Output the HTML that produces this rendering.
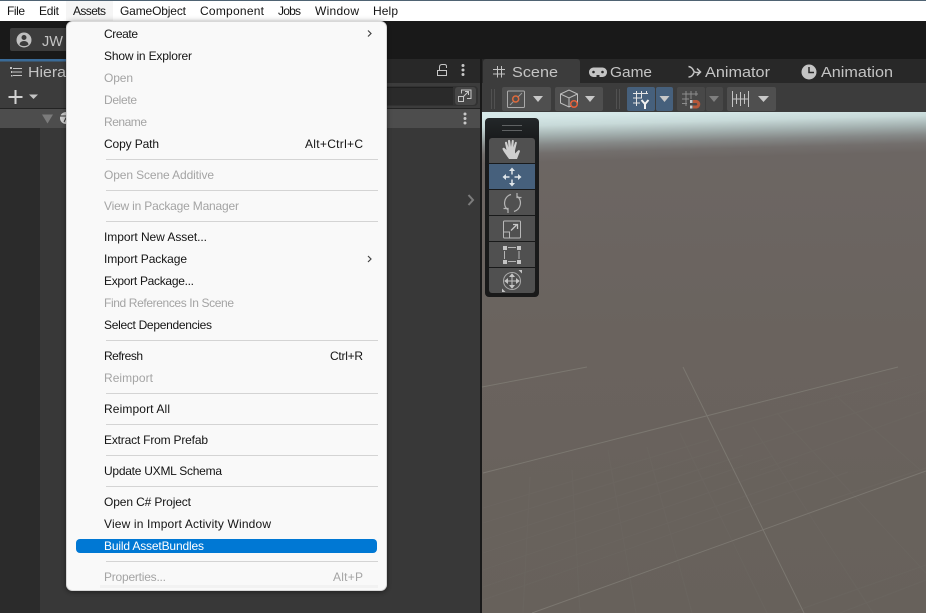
<!DOCTYPE html>
<html><head><meta charset="utf-8"><style>
html,body{margin:0;padding:0;width:926px;height:613px;overflow:hidden;background:#191919}
svg{display:block;position:absolute;left:0;top:0}
text{font-family:"Liberation Sans",sans-serif;font-size:12px;white-space:pre}
.m text{fill:#141414}
.d text{fill:#a4a4a4}
.t text{font-size:15px;fill:#c4c4c4}
</style></head><body>
<svg width="926" height="613" viewBox="0 0 926 613" xmlns="http://www.w3.org/2000/svg">
<defs>
<linearGradient id="sky" gradientUnits="userSpaceOnUse" x1="700" y1="112" x2="701.200" y2="158">
<stop offset="0" stop-color="#d6e8e8"/><stop offset=".2" stop-color="#c8dad9"/><stop offset=".42" stop-color="#a3b0af"/><stop offset=".62" stop-color="#858887"/><stop offset=".8" stop-color="#736f6d"/><stop offset="1" stop-color="#6c6663"/>
</linearGradient>
<linearGradient id="ground" gradientUnits="userSpaceOnUse" x1="0" y1="158" x2="0" y2="613"><stop offset="0" stop-color="#6c6663"/><stop offset=".4" stop-color="#6a635e"/><stop offset="1" stop-color="#67615b"/></linearGradient>
<linearGradient id="tb" x1="0" y1="0" x2="0" y2="1"><stop offset="0" stop-color="#232729"/><stop offset=".12" stop-color="#191b1c"/><stop offset="1" stop-color="#191919"/></linearGradient>
<filter id="sh" x="-10%" y="-5%" width="120%" height="110%"><feDropShadow dx="0" dy="1" stdDeviation="3" flood-color="#000" flood-opacity=".45"/></filter>
</defs>

<rect width="926" height="613" fill="#191919"/>

<!-- left panel -->
<rect x="0" y="59" width="480" height="554" fill="#383838"/>
<rect x="0" y="59" width="480" height="24" fill="#282828"/>
<rect x="0" y="59" width="90" height="24" fill="#3c3c3c"/>
<rect x="0" y="59" width="90" height="2.500" fill="#3a6b98"/>
<rect x="0" y="83" width="480" height="25" fill="#3c3c3c"/>
<rect x="0" y="108" width="480" height="1" fill="#232323"/>
<rect x="0" y="109" width="480" height="19" fill="#4d4d4d"/>
<rect x="0" y="128" width="40" height="485" fill="#2b2b2b"/>
<rect x="380" y="86" width="98" height="20" rx="4" fill="#323232"/>
<rect x="380" y="87" width="73" height="18" fill="#2a2a2a"/>
<rect x="380" y="87" width="73" height="1" fill="#1f1f1f"/>
<rect x="455" y="87" width="21" height="18" rx="3" fill="#474747"/>
<g fill="none" stroke="#c8c8c8" stroke-width="1">
<rect x="458.500" y="96.500" width="5" height="5"/><path d="M461.500 93.500v-3.500h9.500v8.500h-4M463 97l5-5M465 91.500h3.500v3.500"/>
<path d="M439.500 70v-3q0-2.500 2.500-2.500h2.500q2 0 2 2v1.500"/><rect x="437.500" y="70.500" width="9" height="5"/>
</g>
<g fill="#c8c8c8"><circle cx="463" cy="65.500" r="1.500"/><circle cx="463" cy="70" r="1.500"/><circle cx="463" cy="74.500" r="1.500"/>
<circle cx="465" cy="114" r="1.500"/><circle cx="465" cy="118.500" r="1.500"/><circle cx="465" cy="123" r="1.500"/></g>
<!-- hierarchy icon + label -->
<g stroke="#c4c4c4" stroke-width="1" fill="none"><path d="M13 68.500h9M13 72h9M13 75.500h9"/></g>
<g fill="#c4c4c4"><rect x="10" y="67" width="2" height="2"/><rect x="11" y="71" width="1.500" height="2"/><rect x="11" y="75" width="1.500" height="1.500"/></g>
<text x="28" y="77" style="font-size:15px" fill="#c4c4c4" textLength="38" lengthAdjust="spacingAndGlyphs">Hiera</text>
<path d="M15.500 90v14M8.500 97h14" stroke="#d2d2d2" stroke-width="2" fill="none"/>
<path d="M29 94.500h9l-4.500 4.500z" fill="#c4c4c4"/>
<path d="M42 114.500h11l-5.500 9z" fill="#7b7b7b"/>
<circle cx="66" cy="118" r="6" fill="#d0d0d0"/><path d="M60 116h7l-3 6" stroke="#333" stroke-width="1" fill="none"/>
<!-- account -->
<rect x="10" y="28" width="60" height="23" rx="2" fill="#3c3c3c"/>
<circle cx="24" cy="40" r="7.500" fill="#c0c0c0"/><circle cx="24" cy="37.500" r="2.500" fill="#3c3c3c"/><path d="M19.500 44.500a4.500 3.500 0 0 1 9 0a7 7 0 0 1-9 0z" fill="#3c3c3c"/>
<text x="42" y="46" style="font-size:15px" fill="#c4c4c4" textLength="21" lengthAdjust="spacingAndGlyphs">JW</text>
<!-- chevron -->
<path d="M468.500 195l4.500 5-4.500 5" stroke="#7c7c7c" stroke-width="2" fill="none"/>

<!-- scene panel -->
<rect x="480" y="58" width="2" height="555" fill="#191919"/>
<rect x="482" y="59" width="444" height="24" fill="#282828"/>
<path d="M483 83v-21a3 3 0 0 1 3-3h91a3 3 0 0 1 3 3v21z" fill="#3c3c3c"/>
<rect x="482" y="83" width="444" height="29" fill="#3c3c3c"/>
<g class="t">
<text x="512" y="77" textLength="46" lengthAdjust="spacingAndGlyphs">Scene</text>
<text x="610" y="77" textLength="42" lengthAdjust="spacingAndGlyphs">Game</text>
<text x="705" y="77" textLength="65" lengthAdjust="spacingAndGlyphs">Animator</text>
<text x="821" y="77" textLength="72" lengthAdjust="spacingAndGlyphs">Animation</text>
</g>
<!-- tab icons -->
<path d="M497.500 66v11.500M501.500 66v11.500M493 69.500h12M493 74h12" stroke="#c4c4c4" stroke-width="1" fill="none"/>
<rect x="589" y="67.500" width="18" height="9.500" rx="4.500" fill="#c4c4c4"/>
<g fill="#282828"><circle cx="593.500" cy="72" r="1.300"/><circle cx="602.500" cy="72" r="1.300"/><rect x="596.500" y="75" width="3" height="2"/></g>
<path d="M688.500 66.500q3 .5 4.500 3l1 2q1 1 3 1h3M688.500 77q3 0 4.500-2.500l1-2M697 68.500l3.500 3.500-3.500 3.500" stroke="#c4c4c4" stroke-width="1.500" fill="none"/>
<circle cx="809" cy="72" r="7.500" fill="#c4c4c4"/><path d="M809 67v5.500h5" stroke="#282828" stroke-width="1.500" fill="none"/>

<!-- scene toolbar -->
<g fill="#515151"><rect x="491" y="89" width="1" height="20"/><rect x="494" y="89" width="1" height="20"/><rect x="616" y="89" width="1" height="20"/><rect x="619" y="89" width="1" height="20"/></g>
<g fill="#4f4f4f"><rect x="502" y="87" width="49" height="24" rx="2"/><rect x="555" y="87" width="48" height="24" rx="2"/>
<rect x="677" y="87" width="28" height="24" rx="2" fill="#484848"/><rect x="706" y="87" width="17" height="24" rx="2" fill="#484848"/><rect x="727" y="87" width="49" height="24" rx="2"/></g>
<rect x="627" y="87" width="28" height="24" rx="2" fill="#46607c"/><rect x="656" y="87" width="17" height="24" rx="2" fill="#46607c"/>
<g fill="#c8c8c8"><path d="M533 96h10l-5 6z"/><path d="M585 96h10l-5 6z"/><path d="M659.500 96h10l-5 6z"/><path d="M758 96h11l-5.500 6z"/></g>
<path d="M709 96h10l-5 6z" fill="#7f7f7f"/>
<!-- pivot icon -->
<rect x="507.500" y="91" width="17" height="16.500" rx="1" fill="none" stroke="#aaa"/>
<path d="M510 105l12-12" stroke="#999" stroke-width="1"/><circle cx="515.700" cy="99" r="3" fill="#4f4f4f" stroke="#e06a3c" stroke-width="1.500"/>
<!-- cube icon -->
<path d="M560.500 94l8.500-4 8.500 4v9l-8.500 4-8.500-4zM560.500 94l8.500 4 8.500-4M569 98v9" fill="none" stroke="#bdbdbd"/>
<circle cx="574" cy="104" r="3.300" fill="#4f4f4f" stroke="#e2603a" stroke-width="1.500"/>
<!-- grid Y -->
<path d="M636.500 91v15M641.500 91v7M646.500 91v3M633 93.500h15M633 98h9M633 103h7" stroke="#e4e4e4" stroke-width="1" fill="none"/>
<path d="M641.500 100l3.500 4 3.500-4M645 104v5" stroke="#f2f2f2" stroke-width="2" fill="none"/>
<!-- snap -->
<path d="M686 91v15M691 91v8M696 91v5M682 94h16M682 99h7M682 103.500h5" stroke="#8d8d8d" stroke-width="1" fill="none"/>
<path d="M693 101.500h3.500a2.800 2.800 0 0 1 0 5.500h-3.500" stroke="#b5583a" stroke-width="3" fill="none"/>
<rect x="690" y="100" width="2.500" height="3" fill="#ccc"/><rect x="690" y="105.500" width="2.500" height="3" fill="#ccc"/>
<!-- increment -->
<path d="M732.500 91v16M748.500 91v16M736.500 94v10M740.500 92v14M744.500 94v10M733 99h15" stroke="#c4c4c4" stroke-width="1" fill="none"/>

<!-- viewport -->
<rect x="482" y="112" width="444" height="501" fill="url(#sky)"/>
<rect x="482" y="165" width="444" height="448" fill="url(#ground)"/>
<g stroke="#6e6a64" stroke-width="1" fill="none" opacity=".4">
<path d="M530 477l-7 136M572 470l8 143M608 450l28 163M647 447l45 166M680 433l87 180M753 427l120 186M777 413l149 160M835 395l91 80"/>
<path d="M483 508l226-68M483 523l236-73M483 540l260-85M483 553l290-97M483 570l315-108M483 587l335-116M483 600l365-128M790 613l136-48M840 613l86-33M720 430l206-58M740 450l186-60M760 470l166-60M830 500l96-32"/>
</g>
<g stroke="#7b7770" stroke-width="1" fill="none">
<path d="M482 387l105-20M483 473l415-106M683 367l121 246M532 613l394-142"/>
</g>

<!-- tools -->
<rect x="485" y="118" width="54" height="179" rx="4" fill="url(#tb)"/>
<path d="M502 125.500h20M502 130.500h20" stroke="#5f6263" stroke-width="1"/>
<g fill="#505050">
<path d="M489 163v-22a3 3 0 0 1 3-3h40a3 3 0 0 1 3 3v22z"/>
<rect x="489" y="190" width="46" height="25"/><rect x="489" y="216" width="46" height="25"/><rect x="489" y="242" width="46" height="25"/>
<path d="M489 268h46v22a3 3 0 0 1-3 3h-40a3 3 0 0 1-3-3z"/></g>
<rect x="489" y="164" width="46" height="25" fill="#46607c"/>
<!-- hand -->
<path d="M509 159c-2-3-6-8-6.500-10 0-1.500 1.500-1.500 2.500-.5l1.500 1.500-1.500-7c0-1.500 1.500-1.500 2-.5l1.500 5-.5-6.500c0-1.500 2-1.500 2.200 0l.8 6 .8-6c.2-1.500 2-1.500 2 0l-.5 6.500 1.700-5c.5-1 2-.8 1.800.5l-1.800 7.500v3l3-3c1-1 2.500 0 1.800 1.200L517 159z" fill="#cfcfcf"/>
<!-- move -->
<path d="M512 170.500v4M512 179.500v4M505.500 177h4M514.500 177h4" stroke="#e0e6ea" stroke-width="1.500" fill="none"/>
<path d="M512 167.500l-3 3.500h6zM512 186.500l-3-3.500h6zM502.500 177l3.500-3v6zM521.500 177l-3.500-3v6z" fill="#e0e6ea"/>
<!-- rotate -->
<path d="M511 194.500a8.800 8.800 0 0 0-3.500 15M514 211.500a8.800 8.800 0 0 0 3.500-15" fill="none" stroke="#b4b4b4" stroke-width="1.200"/>
<path d="M517 193v4.500h4.500M508 213v-4.500h-4.500" fill="none" stroke="#b4b4b4" stroke-width="1.200"/>
<!-- scale -->
<rect x="503.500" y="221" width="17" height="17" rx="1" fill="none" stroke="#b8b8b8" stroke-width="1"/>
<path d="M503.500 232h6v6" fill="none" stroke="#b8b8b8"/>
<path d="M511 230.500l6-6M513 224.500h4.500v4.500" fill="none" stroke="#c8c8c8" stroke-width="1.300"/>
<!-- rect -->
<g fill="#c4c4c4"><rect x="503" y="246" width="4" height="4"/><rect x="517" y="246" width="4" height="4"/><rect x="503" y="260" width="4" height="4"/><rect x="517" y="260" width="4" height="4"/></g>
<path d="M508 247.500h8M508 261.500h8M504.500 251v8M519 251v8" stroke="#b4b4b4" fill="none"/>
<!-- transform -->
<circle cx="512" cy="281" r="8.500" fill="none" stroke="#aaa" stroke-width="1"/>
<path d="M512 274v14M505 281h14M512 274l-2 2.500h4zM512 288l-2-2.500h4zM505 281l2.500-2v4zM519 281l-2.500-2v4z" fill="#c4c4c4" stroke="#c4c4c4"/>
<path d="M502 292v-3.500l3.500 3.500zM522 270v3.500l-3.500-3.500z" fill="#c4c4c4"/>

<!-- top menu bar -->
<rect width="926" height="21" fill="#ffffff"/>
<rect width="926" height="1" fill="#4f6373"/>
<rect x="66" y="1" width="47" height="20" fill="#f5f5f5"/>
<g class="m">
<text x="7" y="15" textLength="18" lengthAdjust="spacing">File</text>
<text x="39" y="15" textLength="20" lengthAdjust="spacing">Edit</text>
<text x="73" y="15" textLength="33" lengthAdjust="spacing">Assets</text>
<text x="120" y="15" textLength="66" lengthAdjust="spacing">GameObject</text>
<text x="200" y="15" textLength="64" lengthAdjust="spacing">Component</text>
<text x="278" y="15" textLength="23" lengthAdjust="spacing">Jobs</text>
<text x="315" y="15" textLength="44" lengthAdjust="spacing">Window</text>
<text x="373" y="15" textLength="25" lengthAdjust="spacing">Help</text>
</g>

<!-- dropdown -->
<rect x="66.500" y="21.500" width="320" height="569" rx="6" fill="#f9f9f9" stroke="#d8d8d8" stroke-width="1" filter="url(#sh)"/>
<rect x="100" y="585" width="278" height="3" fill="#f2f2f2"/>
<rect x="76" y="539" width="301" height="14" rx="4" fill="#0078d4"/>
<g fill="#d4d4d4">
<rect x="106" y="159" width="272" height="1"/><rect x="106" y="190" width="272" height="1"/><rect x="106" y="221" width="272" height="1"/><rect x="106" y="340" width="272" height="1"/><rect x="106" y="393" width="272" height="1"/><rect x="106" y="424" width="272" height="1"/><rect x="106" y="455" width="272" height="1"/><rect x="106" y="486" width="272" height="1"/><rect x="106" y="561" width="272" height="1"/>
</g>
<path d="M368 30.500l3 3-3 3M368 256l3 3-3 3" stroke="#444" stroke-width="1.200" fill="none"/>
<g class="m">
<text x="104" y="38" textLength="34" lengthAdjust="spacing">Create</text>
<text x="104" y="60" textLength="88" lengthAdjust="spacing">Show in Explorer</text>
<text x="104" y="148" textLength="55" lengthAdjust="spacing">Copy Path</text>
<text x="305" y="148" textLength="58" lengthAdjust="spacing">Alt+Ctrl+C</text>
<text x="104" y="241" textLength="103" lengthAdjust="spacing">Import New Asset...</text>
<text x="104" y="263" textLength="83" lengthAdjust="spacing">Import Package</text>
<text x="104" y="285" textLength="90" lengthAdjust="spacing">Export Package...</text>
<text x="104" y="329" textLength="108" lengthAdjust="spacing">Select Dependencies</text>
<text x="104" y="360" textLength="39" lengthAdjust="spacing">Refresh</text>
<text x="330" y="360" textLength="33" lengthAdjust="spacing">Ctrl+R</text>
<text x="104" y="413" textLength="66" lengthAdjust="spacing">Reimport All</text>
<text x="104" y="444" textLength="104" lengthAdjust="spacing">Extract From Prefab</text>
<text x="104" y="475" textLength="118" lengthAdjust="spacing">Update UXML Schema</text>
<text x="104" y="506" textLength="87" lengthAdjust="spacing">Open C# Project</text>
<text x="104" y="528" textLength="167" lengthAdjust="spacing">View in Import Activity Window</text>
</g>
<g class="d">
<text x="104" y="82" textLength="29" lengthAdjust="spacing">Open</text>
<text x="104" y="104" textLength="33" lengthAdjust="spacing">Delete</text>
<text x="104" y="126" textLength="43" lengthAdjust="spacing">Rename</text>
<text x="104" y="179" textLength="110" lengthAdjust="spacing">Open Scene Additive</text>
<text x="104" y="210" textLength="135" lengthAdjust="spacing">View in Package Manager</text>
<text x="104" y="307" textLength="130" lengthAdjust="spacing">Find References In Scene</text>
<text x="104" y="382" textLength="49" lengthAdjust="spacing">Reimport</text>
<text x="104" y="581" textLength="62" lengthAdjust="spacing">Properties...</text>
<text x="333" y="581" textLength="30" lengthAdjust="spacing">Alt+P</text>
</g>
<text x="104" y="550" fill="#ffffff" textLength="100" lengthAdjust="spacing">Build AssetBundles</text>
</svg>
</body></html>
